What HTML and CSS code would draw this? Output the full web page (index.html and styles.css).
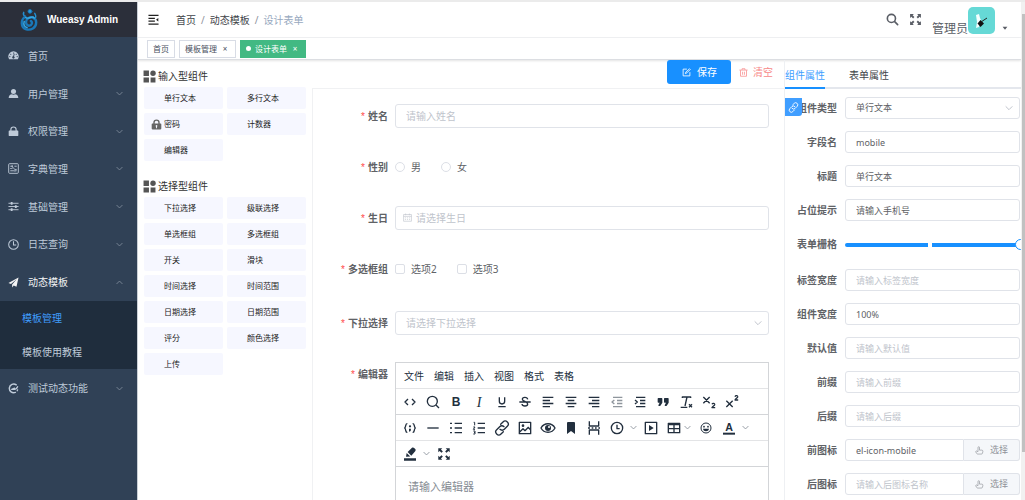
FILE: index.html
```html
<!DOCTYPE html>
<html lang="zh-CN">
<head>
<meta charset="utf-8">
<meta name="viewport" content="width=device-width, initial-scale=1">
<title>Wueasy Admin</title>
<link rel="stylesheet" href="styles.css">
</head>
<body>
<svg class="sprite" aria-hidden="true">
  <symbol id="down" viewBox="0 0 12 12"><path d="M1 3.500l5 5 5-5" fill="none" stroke="currentColor" stroke-width="1.500"/></symbol>
  <symbol id="up" viewBox="0 0 12 12"><path d="M1 8.500l5-5 5 5" fill="none" stroke="currentColor" stroke-width="1.500"/></symbol>
  <symbol id="blocks" viewBox="0 0 24 24"><path d="M1 1h10v10H1zM1 14h10v9H1zM14 14h9v9h-9z"/><circle cx="18.500" cy="6" r="5"/></symbol>
  <symbol id="lock" viewBox="0 0 24 24"><path fill-rule="evenodd" d="M5 10V8a7 7 0 0114 0v2h2a1.500 1.500 0 011.500 1.500v9A2.500 2.500 0 0120 23H4a2.500 2.500 0 01-2.500-2.500v-9A1.500 1.500 0 013 10zm3 0h8V8a4 4 0 00-8 0zm4 3a2 2 0 00-1 3.700V20h2v-3.300A2 2 0 0012 13z"/></symbol>
  <symbol id="lock-solid" viewBox="0 0 24 24"><path fill-rule="evenodd" d="M5 10V8a7 7 0 0114 0v2h2a1.500 1.500 0 011.500 1.500V20a2 2 0 01-2 2h-17a2 2 0 01-2-2v-8.500A1.500 1.500 0 013 10zm2.500 0h9V8a4.500 4.500 0 00-9 0z"/></symbol>
  <symbol id="link" viewBox="0 0 24 24"><g fill="none" stroke="currentColor" stroke-width="2" stroke-linecap="round"><path d="M10 6.500l3.500-3.500a4.500 4.500 0 016.500 6.500l-4.500 4.500a4.500 4.500 0 01-6.500 0"/><path d="M14 17.500L10.500 21A4.500 4.500 0 014 14.500L8.500 10a4.500 4.500 0 016.500 0"/></g></symbol>
  <symbol id="full" viewBox="0 0 24 24"><path d="M2 2h7L6.700 4.300 10 7.600 7.600 10 4.300 6.700 2 9zM22 2h-7l2.300 2.300L14 7.600l2.400 2.400 3.300-3.300L22 9zM2 22h7l-2.300-2.300 3.300-3.300L7.600 14l-3.300 3.300L2 15zM22 22h-7l2.300-2.300-3.300-3.300 2.400-2.400 3.300 3.300L22 15z"/></symbol>
  <symbol id="search" viewBox="0 0 24 24"><g fill="none" stroke="currentColor" stroke-width="3" stroke-linecap="round"><circle cx="10" cy="10" r="7.500"/><path d="M16 16L21.500 21.500"/></g></symbol>
  <symbol id="hand" viewBox="0 0 24 24"><path d="M8 15V4a2 2 0 014 0v7h6a3 3 0 013 3l-1 5a3 3 0 01-3 2.500H8a5 5 0 01-4-2l-2-4a2 2 0 013-2l3 2" fill="none" stroke="currentColor" stroke-width="1.800" stroke-linejoin="round"/></symbol>
</svg>

<div class="app">
  <nav class="sidebar" aria-label="主菜单">
    <a class="brand" href="#">
      <svg class="brand-mark" viewBox="0 0 36 48" fill="none" stroke-linecap="round"><circle cx="20" cy="7" r="4" fill="#2a9bdc" stroke="#1774b5" stroke-width="2"/><path d="M7 9c-2 4 0 7 4 10M30 11c4 7 2 9-1 12" stroke="#2490d2" stroke-width="3"/><path d="M10 18C0 25 1 40 11 44c11 4 22-3 22-14 0-9-9-13-16-9-8 5-6 15 1 16 6 0 8-7 4-10" stroke="#1a78b8" stroke-width="5"/><path d="M11 20c7 5 13-6 18 1M8 28c-2 6 1 11 6 13" stroke="#36a9e5" stroke-width="3"/></svg>
      <span>Wueasy Admin</span>
    </a>
    <div class="menu">
      <a class="menu-item" href="#"><svg class="m-icon" viewBox="0 0 24 24"><path fill-rule="evenodd" d="M12 3a11 11 0 00-9.500 17h19A11 11 0 0012 3zm0 2.500A1.300 1.300 0 1112 8a1.300 1.300 0 010-2.500zM6 8a1.300 1.300 0 110 2.600A1.300 1.300 0 016 8zm12 0a1.300 1.300 0 110 2.600A1.300 1.300 0 0118 8zM4 13a1.300 1.300 0 110 2.600A1.300 1.300 0 014 13zm16 0a1.300 1.300 0 110 2.600 1.300 1.300 0 010-2.600zM14.500 8l-1.300 6a2.500 2.500 0 11-2-.3L13 7.600z"/></svg><span>首页</span></a>
      <a class="menu-item" href="#"><svg class="m-icon" viewBox="0 0 24 24"><circle cx="12" cy="7.500" r="5.500"/><path d="M1.500 22c0-6 3-8 7-8.500q3.500 2 7 0c4 .5 7 2.500 7 8.500z"/></svg><span>用户管理</span><svg class="arrow"><use href="#down"/></svg></a>
      <a class="menu-item" href="#"><svg class="m-icon"><use href="#lock-solid"/></svg><span>权限管理</span><svg class="arrow"><use href="#down"/></svg></a>
      <a class="menu-item" href="#"><svg class="m-icon" viewBox="0 0 24 24" fill="none" stroke="currentColor" stroke-width="2"><rect x="1.500" y="1.500" width="21" height="21" rx="2"/><path d="M5 7h6M14 7h5M5 12h3l3-2 4 4h4M5 17h8M16 17h3M9 5v4M15 15v4"/></svg><span>字典管理</span><svg class="arrow"><use href="#down"/></svg></a>
      <a class="menu-item" href="#"><svg class="m-icon" viewBox="0 0 24 24" fill="none" stroke="currentColor" stroke-width="2"><path d="M1 5h22M1 12h22M1 19h22"/><path d="M8 2v6M17 9v6M8 16v6" stroke-width="4"/></svg><span>基础管理</span><svg class="arrow"><use href="#down"/></svg></a>
      <a class="menu-item" href="#"><svg class="m-icon" viewBox="0 0 24 24" fill="none" stroke="currentColor" stroke-width="2.200"><circle cx="12" cy="12" r="10.500"/><path d="M12 5v8h6"/></svg><span>日志查询</span><svg class="arrow"><use href="#down"/></svg></a>
      <a class="menu-item open" href="#"><svg class="m-icon" viewBox="0 0 24 24"><path d="M23 1L1 13l5.500 2.500L19 5 9 16.500V23l3.500-4.500 6 2.500z"/></svg><span>动态模板</span><svg class="arrow"><use href="#up"/></svg></a>
    </div>
    <div class="submenu">
      <a class="current" href="#">模板管理</a>
      <a href="#">模板使用教程</a>
    </div>
    <a class="menu-item last" href="#"><svg class="m-icon" viewBox="0 0 24 24" fill="none" stroke="currentColor" stroke-width="3.200" stroke-linecap="round"><path d="M18 4A9.500 9.500 0 1016 20.500"/><path d="M8 14c7 1 11-1 13-6M8 14l6-3" stroke-width="2.600"/><path d="M20 17l1-2" stroke-width="2.600"/></svg><span>测试动态功能</span><svg class="arrow"><use href="#down"/></svg></a>
  </nav>

  <div class="page">
    <header class="topbar">
      <button class="plain" aria-label="收起菜单"><svg class="burger" viewBox="0 0 24 24" fill="none" stroke="currentColor" stroke-width="2.500"><path d="M1 3h22M1 9.500h14M1 15.500h14M1 22h22"/><path d="M22.500 8.500v8l-5-4z" fill="currentColor" stroke="none"/></svg></button>
      <div class="crumbs"><a href="#">首页</a><i>/</i><a href="#">动态模板</a><i>/</i><span>设计表单</span></div>
      <div class="tools">
        <button class="plain" aria-label="搜索"><svg class="tool"><use href="#search"/></svg></button>
        <button class="plain" aria-label="全屏"><svg class="tool"><use href="#full"/></svg></button>
        <button class="plain user"><span>管理员</span>
          <svg class="avatar" viewBox="0 0 27 27"><rect width="27" height="27" rx="5" fill="#66d9d6"/><path d="M8 8l3-1 1 4 1 2-1 2-1 5-3 1 1-6z" fill="#f4ffff"/><path d="M12.500 13l3.500 3.500-3.500 3.500-3-3.500z" fill="#111"/><path d="M13 15l6-4" stroke="#222"/></svg>
          <svg class="caret" viewBox="0 0 10 10"><path d="M1 3h8L5 8z"/></svg></button>
      </div>
    </header>
    <div class="tags">
      <a class="tag" href="#">首页</a>
      <a class="tag" href="#">模板管理<b>×</b></a>
      <a class="tag on" href="#"><em></em>设计表单<b>×</b></a>
    </div>

    <main class="work">
      <section class="palette">
        <h2><svg class="h-icon"><use href="#blocks"/></svg>输入型组件</h2>
        <div class="items">
          <button>单行文本</button><button>多行文本</button>
          <button class="with-icon"><svg><use href="#lock"/></svg>密码</button><button>计数器</button>
          <button>编辑器</button>
        </div>
        <h2><svg class="h-icon"><use href="#blocks"/></svg>选择型组件</h2>
        <div class="items">
          <button>下拉选择</button><button>级联选择</button>
          <button>单选框组</button><button>多选框组</button>
          <button>开关</button><button>滑块</button>
          <button>时间选择</button><button>时间范围</button>
          <button>日期选择</button><button>日期范围</button>
          <button>评分</button><button>颜色选择</button>
          <button>上传</button>
        </div>
      </section>

      <section class="canvas">
        <div class="actions">
          <button class="save"><svg viewBox="0 0 24 24" fill="none" stroke="currentColor" stroke-width="2.200"><path d="M13 3H3v18h18V11M9 15l1-4L20 2l2 2L13 13z"/></svg>保存</button>
          <button class="clear"><svg viewBox="0 0 24 24" fill="none" stroke="currentColor" stroke-width="2"><path d="M1 5.500h22M8 5V2h8v3M4 6v16h16V6M9.500 10v8M14.500 10v8"/></svg>清空</button>
        </div>
        <form class="form">
          <div class="row"><label class="req" for="name">姓名</label><input id="name" class="box" placeholder="请输入姓名"></div>
          <div class="row"><span class="req">性别</span><div class="choices"><label><input type="radio" name="sex">男</label><label><input type="radio" name="sex">女</label></div></div>
          <div class="row"><label class="req" for="birth">生日</label><div class="wrap"><svg class="cal" viewBox="0 0 24 24" fill="none" stroke="currentColor" stroke-width="1.700"><path d="M1.500 4h21v18h-21zM1.500 9h21M7 1.500V6M17 1.500V6M5 13h3M10.500 13h3M16 13h3M5 17.500h3M10.500 17.500h3M16 17.500h3"/></svg><input id="birth" class="box date" placeholder="请选择生日"></div></div>
          <div class="row tall"><span class="req">多选框组</span><div class="choices"><label><input type="checkbox">选项2</label><label><input type="checkbox">选项3</label></div></div>
          <div class="row"><label class="req" for="pick">下拉选择</label><div class="wrap"><select id="pick" class="box empty"><option>请选择下拉选择</option></select><svg class="drop"><use href="#down"/></svg></div></div>
          <div class="row"><label class="req" for="rich">编辑器</label>
            <div class="editor">
              <div class="bar menus"><button type="button">文件</button><button type="button">编辑</button><button type="button">插入</button><button type="button">视图</button><button type="button">格式</button><button type="button">表格</button></div>
              <div class="bar">
                <button type="button" aria-label="源代码"><svg viewBox="0 0 24 24"><path class="ln" d="M9 7.500L4.500 12 9 16.500M15 7.500l4.500 4.500-4.500 4.500"/></svg></button>
                <button type="button" aria-label="查找"><svg viewBox="0 0 24 24"><circle class="ln" cx="11" cy="11" r="7.500"/><path class="ln" d="M16.500 16.500L21 21"/></svg></button>
                <button type="button" aria-label="粗体"><svg viewBox="0 0 24 24"><text class="g" x="12" y="18.500">B</text></svg></button>
                <button type="button" aria-label="斜体"><svg viewBox="0 0 24 24"><text class="g ital" x="12" y="19">I</text></svg></button>
                <button type="button" aria-label="下划线"><svg viewBox="0 0 24 24"><path class="ln" d="M8 5v6a4 4 0 008 0V5M6.500 19h11"/></svg></button>
                <button type="button" aria-label="删除线"><svg viewBox="0 0 24 24"><path class="ln" d="M16 8c-.5-4-8-4-8 0 0 3 8 3.500 8 7 0 4-8 4-8.500 0M3.500 12h17"/></svg></button>
                <button type="button" aria-label="左对齐"><svg viewBox="0 0 24 24"><path class="ln" d="M4 5h16M4 9.700h11M4 14.300h16M4 19h11"/></svg></button>
                <button type="button" aria-label="居中"><svg viewBox="0 0 24 24"><path class="ln" d="M4 5h16M7 9.700h10M4 14.300h16M7 19h10"/></svg></button>
                <button type="button" aria-label="右对齐"><svg viewBox="0 0 24 24"><path class="ln" d="M4 5h16M9 9.700h11M4 14.300h16M9 19h11"/></svg></button>
                <button type="button" class="off" aria-label="减少缩进"><svg viewBox="0 0 24 24"><path class="ln" d="M6 5h14M12 9.700h8M12 14.300h8M6 19h14M8 9l-3.500 3L8 15"/></svg></button>
                <button type="button" aria-label="增加缩进"><svg viewBox="0 0 24 24"><path class="ln" d="M6 5h14M12 9.700h8M12 14.300h8M6 19h14M4.500 9L8 12l-3.500 3"/></svg></button>
                <button type="button" aria-label="引用"><svg viewBox="0 0 24 24"><path d="M5.500 18h2c.4 0 .7-.2.900-.6L11 13V7c0-.6-.4-1-1-1H5a1 1 0 00-1 1v5c0 .6.4 1 1 1h2l-2 4zM15 18h2c.4 0 .7-.2.900-.6L20.500 13V7c0-.6-.4-1-1-1h-5a1 1 0 00-1 1v5c0 .6.4 1 1 1h2l-2 4z"/></svg></button>
                <button type="button" aria-label="清除格式"><svg viewBox="0 0 24 24"><path class="ln" d="M6.500 6V4.500H19V6M13.500 4.500L10.500 18M4 20h10M16.500 15.500l4.500 4.500M21 15.500L16.500 20"/></svg></button>
                <button type="button" aria-label="下标"><svg viewBox="0 0 24 24"><path class="ln" d="M3.500 4.500L13 14M13 4.500L3.500 14M16.500 15.500c1-2.500 4.500-1.500 4 .5-.5 1.500-3 2.500-4 4.500h4.800"/></svg></button>
                <button type="button" aria-label="上标"><svg viewBox="0 0 24 24"><path class="ln" d="M3.500 10L13 19.500M13 10L3.500 19.500M16.500 4c1-2.500 4.500-1.500 4 .5-.5 1.500-3 2.500-4 4.500h4.800"/></svg></button>
              </div>
              <div class="bar">
                <button type="button" aria-label="代码示例"><svg viewBox="0 0 24 24"><path class="ln" d="M8 5.500C4.500 5 6.500 10.500 4 12c2.500 1.500.5 7 4 6.500M16 5.500c3.500-.5 1.500 5 4 6.500-2.500 1.500-.5 7-4 6.500"/><circle cx="12" cy="9.500" r="1.700"/><path d="M10.500 13h3l-.5 3.500-2.500 1z"/></svg></button>
                <button type="button" aria-label="水平线"><svg viewBox="0 0 24 24"><path class="ln" d="M3.500 12h17"/></svg></button>
                <button type="button" aria-label="项目符号"><svg viewBox="0 0 24 24"><path class="ln" d="M10 5h11M10 12h11M10 19h11M3 5h3M3 12h3M3 19h3"/></svg></button>
                <button type="button" aria-label="编号"><svg viewBox="0 0 24 24"><path class="ln" d="M10 5h11M10 12h11M10 19h11"/><path class="thin" d="M4 3.500h1.500V8M3.500 10.500H6L3.500 14H6M3.500 16.500H6V21H3.500M4.500 18.700H6"/></svg></button>
                <button type="button" aria-label="链接"><svg><use href="#link"/></svg></button>
                <button type="button" aria-label="图片"><svg viewBox="0 0 24 24"><path class="ln" d="M3.500 3.500h17v17h-17zM4 18l5-5 3 3 5-5 3.500 4"/><circle cx="9" cy="8.500" r="2"/></svg></button>
                <button type="button" aria-label="预览"><svg viewBox="0 0 24 24"><path class="ln" d="M1.500 12C6 3.500 18 3.500 22.500 12 18 20.500 6 20.500 1.500 12z"/><circle cx="12" cy="12" r="4.500"/><circle cx="13.500" cy="10.500" r="1.500" fill="#fff"/></svg></button>
                <button type="button" aria-label="书签"><svg viewBox="0 0 24 24"><path d="M6 4.500A1.500 1.500 0 017.500 3h9A1.500 1.500 0 0118 4.500V21l-6-4.500L6 21z"/></svg></button>
                <button type="button" aria-label="分页符"><svg viewBox="0 0 24 24"><path class="ln" d="M5 2v7h14V2M5 22v-7h14v7M3 12h3M8.500 12h2.500M13.500 12H16M18.500 12H21"/></svg></button>
                <button type="button" aria-label="日期时间"><svg viewBox="0 0 24 24"><circle class="ln" cx="12" cy="12" r="8.500"/><path class="ln" d="M12 7v6h4"/></svg></button>
                <button type="button" class="more" aria-label="日期格式"><svg><use href="#down"/></svg></button>
                <button type="button" aria-label="媒体"><svg viewBox="0 0 24 24"><path class="ln" d="M3.500 3.500h17v17h-17z"/><path d="M9 7.500l7 4.500-7 4.500z"/></svg></button>
                <button type="button" class="table-button" aria-label="表格"><svg viewBox="0 0 24 24"><path class="ln" d="M3.500 5h17v14h-17zM3.500 7h17M3.500 13h17M12 7v12"/></svg><svg class="mini"><use href="#down"/></svg></button>
                <button type="button" aria-label="表情"><svg viewBox="0 0 24 24"><circle class="thin" cx="12" cy="12" r="7.500"/><circle cx="9" cy="10" r="1.300"/><circle cx="15" cy="10" r="1.300"/><path d="M7.500 13h9c-.5 5-8.500 5-9 0z"/></svg></button>
                <button type="button" aria-label="文字颜色"><svg viewBox="0 0 24 24"><text class="g fore" x="12" y="16">A</text><path d="M3 19h18v3H3z"/></svg></button>
                <button type="button" class="more" aria-label="更多颜色"><svg><use href="#down"/></svg></button>
              </div>
              <div class="bar">
                <button type="button" aria-label="背景颜色"><svg viewBox="0 0 24 24"><path d="M3 18.500h18V22H3zM6 16l1-5.500 5.500 5.300zM8.500 9L15 2.800c1-1 2.300-.8 3.200.1l1.600 1.600c1 1 1 2.200 0 3.200L14 14.500z"/></svg></button>
                <button type="button" class="more" aria-label="更多背景"><svg><use href="#down"/></svg></button>
                <button type="button" aria-label="全屏编辑"><svg viewBox="-2 -2 28 28"><use href="#full" width="24" height="24"/></svg></button>
              </div>
              <textarea id="rich" placeholder="请输入编辑器"></textarea>
            </div>
          </div>
        </form>
      </section>

      <aside class="props">
        <div class="tabs" role="tablist"><button role="tab" aria-selected="true" class="active">组件属性</button><button role="tab" aria-selected="false">表单属性</button></div>
        <a class="doc-link" href="#" aria-label="文档"><svg><use href="#link"/></svg></a>
        <form class="fields">
          <div class="field"><label for="p1">组件类型</label><div class="wrap"><select id="p1" class="box"><option>单行文本</option></select><svg class="drop"><use href="#down"/></svg></div></div>
          <div class="field"><label for="p2">字段名</label><input id="p2" class="box" value="mobile"></div>
          <div class="field"><label for="p3">标题</label><input id="p3" class="box" value="单行文本"></div>
          <div class="field"><label for="p4">占位提示</label><input id="p4" class="box" value="请输入手机号"></div>
          <div class="field slider"><label for="p5">表单栅格</label><input id="p5" type="range" min="1" max="24" value="24"></div>
          <div class="field"><label for="p6">标签宽度</label><input id="p6" class="box" placeholder="请输入标签宽度"></div>
          <div class="field"><label for="p7">组件宽度</label><input id="p7" class="box" value="100%"></div>
          <div class="field"><label for="p8">默认值</label><input id="p8" class="box" placeholder="请输入默认值"></div>
          <div class="field"><label for="p9">前缀</label><input id="p9" class="box" placeholder="请输入前缀"></div>
          <div class="field"><label for="p10">后缀</label><input id="p10" class="box" placeholder="请输入后缀"></div>
          <div class="field"><label for="p11">前图标</label><div class="group"><input id="p11" class="box" value="el-icon-mobile"><button type="button"><svg><use href="#hand"/></svg>选择</button></div></div>
          <div class="field"><label for="p12">后图标</label><div class="group"><input id="p12" class="box" placeholder="请输入后图标名称"><button type="button"><svg><use href="#hand"/></svg>选择</button></div></div>
        </form>
      </aside>
    </main>
  </div>
  <div class="scrollbar" aria-hidden="true"><div class="thumb"></div></div>
</div>
</body>
</html>
```

FILE: styles.css
```css
* { box-sizing: border-box; }
body {
  margin: 0;
  height: 100vh;
  overflow: hidden;
  background: #fff;
  color: #404348;
  font: 10px/16px "Noto Sans", "Noto Sans CJK SC", sans-serif;
}
a { color: inherit; text-decoration: none; }
button, input, select, textarea { font: inherit; color: inherit; margin: 0; }
button { padding: 0; border: 0; background: none; white-space: nowrap; cursor: pointer; }
svg { display: block; flex: none; }
svg:not([fill]) { fill: currentColor; }
.sprite { position: absolute; width: 0; height: 0; }

.app { display: flex; height: 100vh; border-top: 2px solid #ebebeb; }

/* Sidebar */
.sidebar { flex: none; width: 138px; border-right: 1px solid #c9cfd6; background: #304156; color: #bfcbd9; }
.brand {
  display: flex; align-items: center; gap: 9px; height: 35px; padding-left: 20px;
  background: #2b2f3a; color: #fff; font: bold 10px/16px "Liberation Sans", sans-serif;
}
.brand-mark { width: 18px; height: 23px; }
.menu { display: grid; grid-template-rows: repeat(7, 1fr); height: 264px; }
.menu-item { display: flex; align-items: center; gap: 9px; padding: 0 14px 0 8px; }
.m-icon { width: 11px; height: 11px; }
.arrow { width: 7px; height: 7px; margin-left: auto; color: #7f8b9a; }
.menu-item.open { color: #f4f4f5; }
.menu-item.open .arrow { color: #7f8b9a; }
.submenu { background: #1f2d3d; }
.submenu a { display: block; padding-left: 22px; line-height: 34px; }
.submenu .current { color: #409eff; }
.menu-item.last { height: 38px; }

/* Header */
.page { flex: 1; min-width: 0; display: flex; flex-direction: column; }
.topbar { display: flex; align-items: center; height: 36px; padding: 0 12px 0 10px; border-bottom: 1px solid #f0f1f3; flex: none; }
.plain { display: flex; align-items: center; }
.burger { width: 11px; height: 11px; color: #222; }
.crumbs { display: flex; gap: 5px; margin-left: 17px; white-space: nowrap; }
.crumbs i { font-style: normal; color: #8d929b; }
.crumbs span { color: #97a8be; }
.tools { display: flex; align-self: stretch; align-items: center; gap: 10px; margin-left: auto; color: #5a5e66; }
.tool { width: 13px; height: 13px; }
.user { align-self: flex-end; align-items: flex-end; font-size: 12px; }
.avatar { width: 27px; height: 27px; margin-bottom: 3px; }
.caret { width: 6px; height: 6px; margin: 0 1px 6px 7px; }
.tags {
  display: flex; align-items: center; gap: 4px; height: 22px; padding: 0 9px; flex: none;
  border-bottom: 1px solid #dcdee2; box-shadow: 0 1px 2px #0000001c; font-size: 8px; color: #495060;
}
.tag { display: flex; align-items: center; height: 18px; padding: 0 5px; border: 1px solid #d8dce5; line-height: 16px; }
.tag b { width: 10px; margin-left: 3px; text-align: center; font-weight: normal; }
.tag.on { background: #42b983; border-color: #42b983; color: #fff; }
.tag em { width: 5px; height: 5px; margin-right: 4px; border-radius: 50%; background: #fff; }

.work { flex: 1; display: flex; min-height: 0; overflow: hidden; }

/* Component palette */
.palette { flex: none; width: 174px; padding: 8px 6px 0 5px; }
.palette h2 { display: flex; align-items: center; gap: 2px; margin: 0; font-size: 10px; font-weight: normal; color: #333; }
.h-icon { width: 13px; height: 13px; color: #555; }
.items { display: grid; grid-template-columns: 1fr 1fr; grid-auto-rows: 22px; gap: 4px; margin: 3px 0 17px 1px; }
.items button { display: flex; align-items: center; padding-left: 20px; border-radius: 2px; background: #f6f7ff; font-size: 8px; color: #222; }
.items .with-icon { padding-left: 7px; gap: 2px; }
.items svg { width: 11px; height: 11px; color: #666; }

/* Form canvas */
.canvas { flex: 1; min-width: 0; border-right: 1px solid #eef0f3; }
.actions { display: flex; justify-content: flex-end; gap: 8px; height: 28px; padding-right: 11px; }
.actions button { display: flex; align-items: center; height: 24px; }
.save { gap: 6px; padding: 0 14px 0 15px; border-radius: 3px; background: #1890ff; color: #fff; }
.clear { gap: 5px; color: #f78989; }
.actions svg { width: 9px; height: 9px; }
.form { border: solid #f0f1f3; border-width: 1px 0 0 1px; padding: 15px 15px 0 0; }
.row { display: grid; grid-template-columns: 75px minmax(0, 1fr); gap: 7px; min-height: 24px; margin-bottom: 27px; }
.row.tall { min-height: 27px; }
.req { text-align: right; font-weight: bold; line-height: 24px; color: #606266; }
.req::before { content: "*"; margin-right: 3px; color: #ff4949; font-weight: normal; font-family: "Liberation Sans", sans-serif; line-height: 1; }
.box {
  display: block; width: 100%; height: 24px; padding: 0 10px; outline: 0;
  border: 1px solid #e0e3e9; border-radius: 3px; background: #fff; color: #606266; appearance: none;
}
.box::placeholder { color: #c0c4cc; opacity: 1; }
.empty { color: #c0c4cc; }
.date { padding-left: 20px; }
.wrap { position: relative; }
.cal { position: absolute; left: 8px; top: 7px; width: 9px; height: 9px; color: #c0c4cc; }
.drop { position: absolute; right: 7px; top: 8px; width: 8px; height: 8px; color: #c0c4cc; }
.choices { display: flex; gap: 20px; height: 24px; color: #606266; }
.choices label { display: flex; align-items: center; gap: 6px; }
.choices input { width: 10px; height: 10px; border: 1px solid #dcdfe6; border-radius: 2px; background: #fff; appearance: none; }
.choices input[type="radio"] { border-radius: 50%; }

/* Rich text editor */
.editor { border: 1px solid #d3d5d8; color: #222f3e; }
.bar { display: flex; align-items: center; height: 26px; padding-left: 2px; border-bottom: 1px solid #e3e4e6; }
.bar:nth-child(2), .bar:nth-child(4) { border-bottom-color: #d3d5d8; }
.bar button { display: flex; align-items: center; justify-content: center; width: 23px; height: 24px; }
.menus { gap: 10px; padding-left: 8px; }
.menus button { width: auto; }
.bar svg { width: 16px; height: 16px; }
.bar .off { opacity: 0.5; }
.bar .more { width: 11px; }
.bar .more svg, .bar .mini { width: 7px; height: 7px; color: #8a919a; }
.bar .table-button { width: 32px; gap: 2px; }
.ln { fill: none; stroke: currentColor; stroke-width: 2; stroke-linejoin: round; }
.thin { fill: none; stroke: currentColor; stroke-width: 1.5; }
.g { text-anchor: middle; font-weight: bold; font-size: 18px; font-family: "Liberation Sans", sans-serif; }
.ital { font-family: "Liberation Serif", serif; font-style: italic; font-weight: normal; font-size: 21px; }
.fore { font-size: 16px; }
.editor textarea { display: block; width: 100%; height: 120px; padding: 12px; border: 0; outline: 0; resize: none; font-size: 11px; }
.editor textarea::placeholder { color: #858b93; opacity: 1; }

/* Property panel */
.props { flex: none; width: 236px; position: relative; overflow: hidden; }
.tabs { display: flex; gap: 24px; height: 29px; border-bottom: 2px solid #e4e7ed; }
.tabs button { height: 29px; padding-top: 2px; border-bottom: 2px solid transparent; }
.tabs .active { color: #409eff; border-color: #1890ff; }
.doc-link {
  position: absolute; left: 0; top: 38px; display: grid; place-items: center; width: 17px; height: 18px;
  background: #409eff; border-radius: 0 0 3px 0; color: #fff;
}
.doc-link svg { width: 11px; height: 11px; }
.fields { display: grid; gap: 12px; padding-top: 8px; font-size: 9px; }
.field { display: grid; grid-template-columns: 52px minmax(0, 1fr); gap: 8px; min-height: 22px; padding-right: 1px; }
.field > label { text-align: right; font-size: 10px; font-weight: bold; line-height: 22px; color: #606266; white-space: nowrap; }
.field .box { height: 22px; }
.field .drop { top: 7px; }
.slider { min-height: 24px; }
.slider input { width: calc(100% + 6px); height: 24px; background: none; appearance: none; }
.slider input::-webkit-slider-runnable-track {
  height: 4px; border-radius: 2px;
  background: linear-gradient(to right, #1890ff 46%, #fff 46% 48%, #1890ff 48%);
}
.slider input::-webkit-slider-thumb { width: 11px; height: 11px; margin-top: -4px; border: 1px solid #1890ff; border-radius: 50%; background: #fff; appearance: none; }
.group { display: flex; }
.group .box { flex: 1; min-width: 0; border-radius: 3px 0 0 3px; }
.group button {
  display: flex; align-items: center; justify-content: center; gap: 6px; width: 56px; height: 22px;
  border: 1px solid #e0e3e9; border-left: 0; border-radius: 0 3px 3px 0; background: #f5f7fa; color: #909399;
}
.group svg { width: 9px; height: 9px; }

.scrollbar { flex: none; width: 4px; padding: 12px 0 48px 1px; background: #f1f1f1; }
.thumb { height: 100%; background: #c1c1c1; }
```
